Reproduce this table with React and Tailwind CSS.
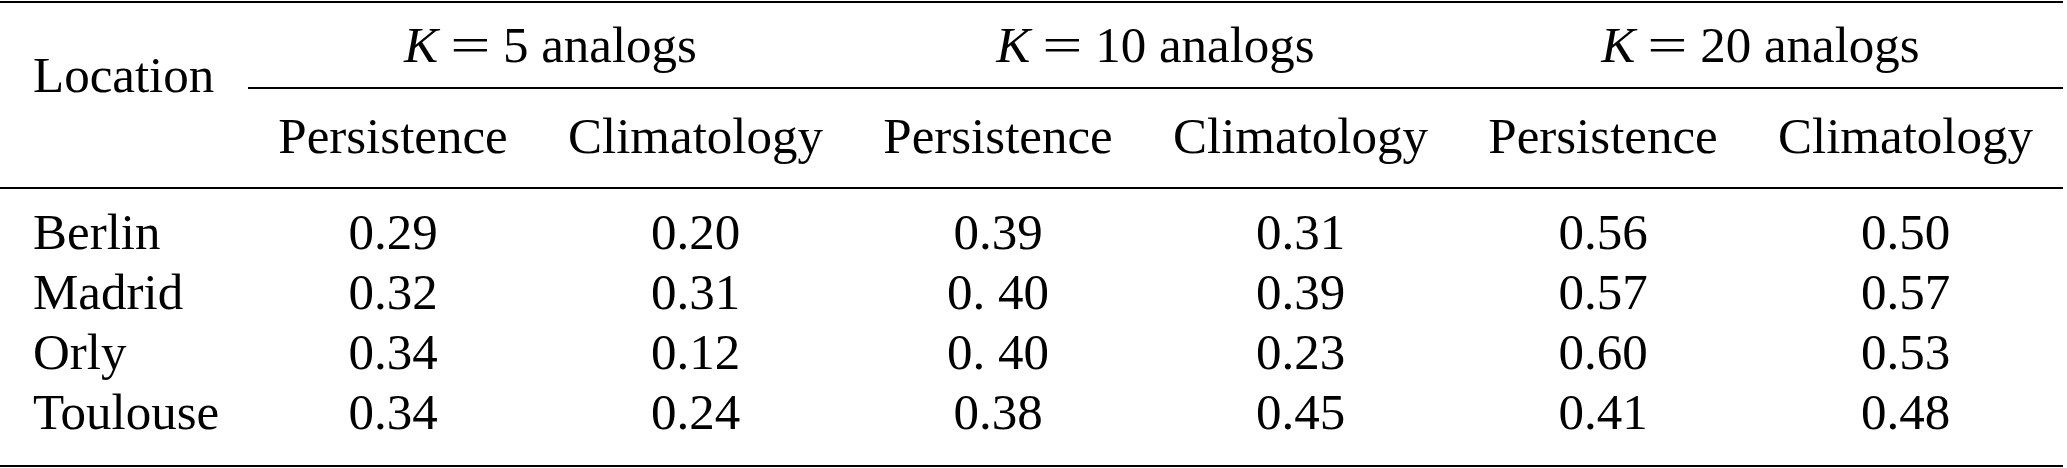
const groups = [
  { k: "5" },
  { k: "10" },
  { k: "20" },
];

const rows = [
  { loc: "Berlin", vals: ["0.29", "0.20", "0.39", "0.31", "0.56", "0.50"] },
  { loc: "Madrid", vals: ["0.32", "0.31", "0. 40", "0.39", "0.57", "0.57"] },
  { loc: "Orly", vals: ["0.34", "0.12", "0. 40", "0.23", "0.60", "0.53"] },
  { loc: "Toulouse", vals: ["0.34", "0.24", "0.38", "0.45", "0.41", "0.48"] },
];

const cols = "grid grid-cols-[248px_290px_315px_290px_315px_290px_315px]";

export default function App() {
  return (
    <div className="w-[2067px] h-[468px] bg-white text-black">
      <div className="w-[2063px] font-['Liberation_Serif','Times_New_Roman',serif] text-[51px]">
        {/* top rule */}
        <div className="mt-px h-[2px] bg-black" />

        {/* header */}
        <div className={`${cols} grid-rows-[86px_98px]`}>
          <div className="row-span-2 pl-[33px] pt-[42px] leading-[60px]">Location</div>
          {groups.map((g) => (
            <div key={g.k} className="col-span-2 pt-[12px] pb-[12px] border-b-2 border-black text-center leading-[60px]">
              <span className="italic">K</span>
              <span className="inline-block mx-[18px] scale-x-[1.4]">=</span>
              {g.k} analogs
            </div>
          ))}
          {groups.map((g) => (
            <div key={g.k} className="contents">
              <div className="pt-[17px] text-center leading-[60px]">Persistence</div>
              <div className="pt-[17px] text-center leading-[60px]">Climatology</div>
            </div>
          ))}
        </div>

        {/* mid rule */}
        <div className="h-[2px] bg-black" />

        {/* body */}
        <div className="pt-[13px] pb-[23px]">
          {rows.map((r) => (
            <div key={r.loc} className={`${cols} leading-[60px]`}>
              <div className="pl-[33px]">{r.loc}</div>
              {r.vals.map((v, i) => (
                <div key={i} className="text-center">{v}</div>
              ))}
            </div>
          ))}
        </div>

        {/* bottom rule */}
        <div className="h-[2px] bg-black" />
      </div>
    </div>
  );
}
